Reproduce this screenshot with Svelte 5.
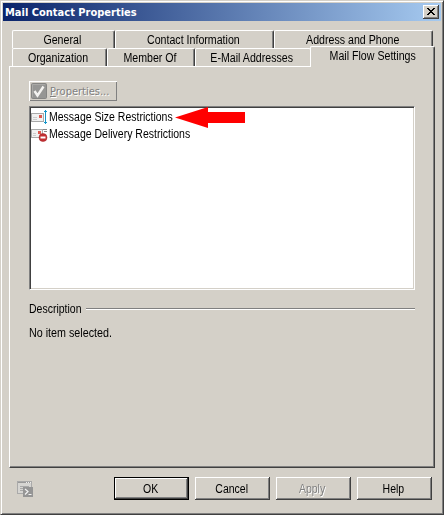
<script>
  const backTabs = [
    { label: 'General', width: 103 },
    { label: 'Contact Information', width: 159 },
    { label: 'Address and Phone', width: 159 }
  ];
  const frontTabs = [
    { label: 'Organization', width: 95 },
    { label: 'Member Of', width: 88 },
    { label: 'E-Mail Addresses', width: 116 }
  ];
</script>

<div class="window">
  <header class="titlebar">
    <span class="title">Mail Contact Properties</span>
    <button class="close" aria-label="Close">
      <svg width="8" height="7" viewBox="0 0 8 7" shape-rendering="crispEdges"><path d="M0 0h2v1h1v1h2V1h1V0h2v1H7v1H6v1H5v1h1v1h1v1h1v1H6V6H5V5H3v1H2v1H0V6h1V5h1V4h1V3H2V2H1V1H0z" fill="#000" /></svg>
    </button>
  </header>

  <main>
    <nav>
      <div class="row back">
        {#each backTabs as tab}
          <button class="tab" style:width="{tab.width}px"><span>{tab.label}</span></button>
        {/each}
      </div>
      <div class="row front">
        {#each frontTabs as tab}
          <button class="tab" style:width="{tab.width}px"><span>{tab.label}</span></button>
        {/each}
        <button class="tab active"><span>Mail Flow Settings</span></button>
      </div>
    </nav>

    <section class="panel">
      <button class="properties" disabled>
        <svg width="16" height="16" viewBox="0 0 16 16"><rect x=".5" y=".5" width="15" height="15" rx="1" fill="#969694" stroke="#858583" /><path d="M1.5 14V1.5H14" fill="none" stroke="#aaa9a6" /><path d="M3.500 8l3 4.500L12.500 3.500" fill="none" stroke="#f4f3f0" stroke-width="2.400" /></svg>
        <span class="caption"><u>P</u>roperties...</span>
      </button>

      <div class="list">
        <div class="item">
          <svg width="17" height="16" viewBox="0 0 17 16">
            <rect x=".5" y="3.500" width="12" height="8" fill="#f1f1f1" stroke="#a9a9a9" />
            <path d="M2 7.500h4M2 9.500h4" stroke="#ccc" />
            <rect x="8" y="5" width="3" height="3" fill="#dd5a50" />
            <path d="M14.500 0v14M13 1.500h3M13 12.500h3" stroke="#1495c8" />
          </svg>
          <span class="label">Message Size Restrictions</span>
          <svg class="arrow" width="71" height="21" viewBox="0 0 71 21"><path d="M0 10.500L33 0v5H70v11H33v5z" fill="#f00" /></svg>
        </div>
        <div class="item">
          <svg width="17" height="16" viewBox="0 0 17 16">
            <rect x=".5" y="2.500" width="11" height="8" fill="#f1f1f1" stroke="#a9a9a9" />
            <path d="M2 6.500h3M2 8.500h3" stroke="#ccc" />
            <rect x="7" y="4" width="3" height="3" fill="#dd5a50" />
            <path d="M12 2.500h4M13 4.500h3" stroke="#888" />
            <circle cx="12" cy="10.500" r="4" fill="#c32f32" stroke="#a52024" stroke-width=".5" />
            <path d="M9.500 10.500h5" stroke="#fff" stroke-width="2" />
          </svg>
          <span class="label">Message Delivery Restrictions</span>
        </div>
      </div>

      <div class="group"><span class="label">Description</span><hr /></div>
      <p><span class="label">No item selected.</span></p>
    </section>
  </main>

  <footer>
    <svg class="shell" width="17" height="17" viewBox="0 0 17 17">
      <rect x=".5" y=".5" width="14" height="12" fill="#d6d5d2" stroke="#aaa" />
      <path d="M1 1.500h13" stroke="#999" /><path d="M9 1.500h1M11 1.500h1M13 1.500h1" stroke="#eee" />
      <path d="M3 5.500h9M3 7.500h4M3 9.500h3" stroke="#a8a8a8" />
      <rect x="6" y="6" width="10" height="10" fill="#959595" />
      <path d="M8 8l3 2.500-3 3M11.500 13.500h3" fill="none" stroke="#f2f2f2" stroke-width="1.200" />
    </svg>
    <button class="btn default"><span>OK</span></button>
    <button class="btn"><span>Cancel</span></button>
    <button class="btn" disabled><span>Apply</span></button>
    <button class="btn"><span>Help</span></button>
  </footer>
</div>

<style>
  * { box-sizing: border-box; }
  button { font: inherit; color: inherit; margin: 0; padding: 0; border: 0; border-radius: 0; background: #d4d0c8; }
  svg { display: block; flex: none; }
  .window {
    width: 444px; height: 515px; padding: 2px; background: #d4d0c8; color: #000;
    font: 12px/13px "Liberation Sans", Arial, sans-serif; white-space: nowrap;
    border: 1px solid; border-color: #d4d0c8 #404040 #404040 #d4d0c8;
    box-shadow: inset 1px 1px #fff, inset -1px -1px #808080;
    display: flex; flex-direction: column;
  }
  .tab span, .btn span, .label { display: inline-block; transform: scaleX(.875); }
  .tab span { transform: scaleX(.885); }
  .label { transform-origin: 0 50%; }
  .titlebar {
    height: 18px; display: flex; align-items: center; justify-content: space-between;
    padding: 0 2px; background: linear-gradient(90deg, #0a246a, #a6caf0); color: #fff;
  }
  .title { font: bold 11px/14px "DejaVu Sans Condensed", "DejaVu Sans", sans-serif; font-stretch: condensed; padding-top: 1px; }
  .close {
    width: 16px; height: 14px; padding: 3px 0 0 4px; display: flex; align-items: flex-start;
    box-shadow: inset -1px -1px #404040, inset 1px 1px #fff, inset -2px -2px #808080;
  }
  main { padding: 9px 6px 0 6px; }
  nav { padding-left: 3px; }
  .row { display: flex; height: 18px; }
  .tab { height: 18px; padding: 1px 2px 0 0; border-top: 1px solid #fff; border-left: 1px solid #fff; border-right: 1px solid #404040; border-radius: 2px 2px 0 0; box-shadow: inset -1px 0 #808080; }
  .row.front .tab:nth-child(3) { border-right-color: #fff; box-shadow: none; }
  .row .tab.active { width: 125px; height: 21px; margin: -2px 0 0 -1px; padding: 1px 0 2px; position: relative; }
  .panel {
    height: 402px; padding: 14px 19px 0 20px; border: 1px solid; border-color: #fff #404040 #404040 #fff;
    box-shadow: inset -1px -1px #808080;
  }
  .properties {
    width: 88px; height: 20px; padding: 0 0 0 2px; display: flex; align-items: center; gap: 3px; margin-left: -1px;
    font: 11px/14px "DejaVu Sans Condensed", "DejaVu Sans", sans-serif; font-stretch: condensed;
    color: #808080; text-shadow: 1px 1px #fff;
    box-shadow: inset 1px 1px #fff, inset -1px -1px #808080;
  }
  .caption { padding-top: 1px; }
  .list {
    width: 386px; height: 184px; margin: 5px 0 0 -1px; padding: 2px 2px 2px 1px; background: #fff;
    border: 1px solid; border-color: #808080 #fff #fff #808080; box-shadow: inset 1px 1px #404040, inset -1px -1px #d4d0c8;
  }
  .item { height: 17px; display: flex; align-items: center; gap: 1px; }
  .arrow { margin-left: -16px; }
  .group { display: flex; align-items: center; height: 13px; margin: 13px 0 0 -1px; }
  .group hr { flex: 1; margin: -1px 0 0 -3px; height: 2px; border: 0; border-top: 1px solid #808080; background: #fff; }
  p { margin: 11px 0 0 -1px; line-height: 13px; }
  p .label { transform: scaleX(.895); }
  footer { display: flex; gap: 6px; padding: 9px 0 0 14px; }
  .shell { margin: 4px 74px 0 0; }
  .btn { width: 75px; height: 23px; padding: 1px 2px 0 0; box-shadow: inset -1px -1px #404040, inset 1px 1px #fff, inset -2px -2px #808080; }
  .btn.default { border: 1px solid #000; }
  .btn:disabled { color: #808080; text-shadow: 1px 1px #fff; }
</style>
